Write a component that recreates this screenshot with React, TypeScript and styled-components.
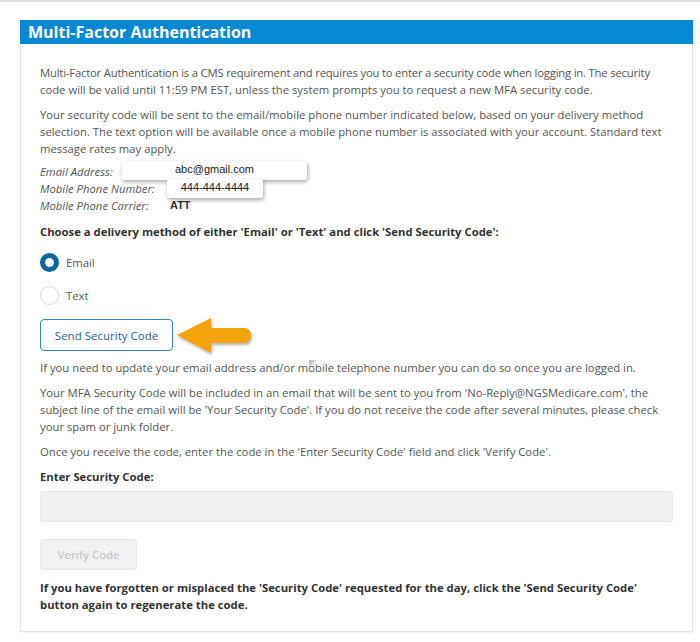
import React from "react";
import styled, { createGlobalStyle } from "styled-components";

const Global = createGlobalStyle`
  html, body { margin: 0; padding: 0; background: #fff; }
  body { font-family: "Open Sans", "Liberation Sans", sans-serif; }
`;

const Page = styled.div`
  width: 700px;
  height: 642px;
  box-sizing: border-box;
  border-top: 2px solid #dcdcdc;
  padding: 18px 0 0 20px;
  position: relative;
  overflow: hidden;
`;

const Card = styled.section`
  width: 673px;
  box-sizing: border-box;
  border: 1px solid #e4e4e4;
  border-top: none;
  box-shadow: 0 1px 2px rgba(0, 0, 0, 0.06);
  background: #fff;
`;

const Header = styled.h1`
  height: 24px;
  background: #0689d4;
  color: #fff;
  font-size: 16px;
  font-weight: 700;
  line-height: 24px;
  padding-left: 8px;
  margin: 0 -1px;
`;

const Body = styled.div`
  padding: 20px 19px 18px 19px;
  color: #555;
  font-size: 11.3px;
  line-height: 17px;
`;

const P = styled.p<{ $bold?: boolean; $mt?: number }>`
  margin: ${(p) => p.$mt ?? 8}px 0 0 0;
  font-weight: ${(p) => (p.$bold ? 700 : 400)};
  color: ${(p) => (p.$bold ? "#333" : "#555")};
  &:first-child { margin-top: 0; }
`;

const Line = styled.span<{ $ls?: number }>`
  display: block;
  white-space: nowrap;
  letter-spacing: ${(p) => p.$ls ?? 0}px;
`;

const InfoList = styled.div`
  margin-top: 6px;
  display: grid;
  grid-template-columns: 130px 1fr;
  position: relative;
`;

const InfoLabel = styled.span`
  font-style: italic;
  color: #555;
`;

const InfoValue = styled.span`
  font-family: "Liberation Sans", Arial, sans-serif;
  font-weight: 700;
  color: #333;
  font-size: 11px;
`;

const Callout = styled.div<{ $left: number; $top: number; $width: number }>`
  position: absolute;
  left: ${(p) => p.$left}px;
  top: ${(p) => p.$top}px;
  width: ${(p) => p.$width}px;
  height: 19px;
  background: #fff;
  border-radius: 3px;
  box-shadow: 1px 2px 4px rgba(0, 0, 0, 0.35);
  font-family: "Liberation Sans", Arial, sans-serif;
  font-size: 11px;
  line-height: 17px;
  color: #222;
  text-align: center;
`;

const Radios = styled.div`
  margin-top: 13px;
  display: flex;
  flex-direction: column;
  gap: 14px;
`;

const RadioRow = styled.label`
  display: flex;
  align-items: center;
  gap: 7px;
  height: 19px;
  color: #555;
`;

const RadioDot = styled.span<{ $checked?: boolean }>`
  width: 19px;
  height: 19px;
  box-sizing: border-box;
  border-radius: 50%;
  background: #fff;
  border: ${(p) => (p.$checked ? "5px solid #0b679f" : "1px solid #dcdcdc")};
`;

const ActionRow = styled.div`
  margin-top: 14px;
  height: 32px;
  display: flex;
  align-items: center;
`;

const OutlineButton = styled.button`
  width: 133px;
  height: 32px;
  box-sizing: border-box;
  border: 1px solid #3a83b3;
  border-radius: 4px;
  background: #fff;
  color: #1f5f8f;
  font-family: "Open Sans", sans-serif;
  font-size: 11.5px;
  padding: 0;
  flex-shrink: 0;
`;

const Arrow = styled.svg`
  margin-left: 3px;
  flex-shrink: 0;
  filter: drop-shadow(1px 2px 1.5px rgba(0, 0, 0, 0.3));
`;

const NoteWrap = styled.div`
  position: relative;
`;

const Cursor = styled.span`
  position: absolute;
  left: 269px;
  top: 1px;
  width: 7px;
  height: 7px;
  background: linear-gradient(135deg, #888 0%, #bbb 55%, transparent 56%);
  opacity: 0.6;
`;

const FieldLabel = styled.div`
  margin-top: 8px;
  font-weight: 700;
  color: #333;
`;

const Input = styled.div`
  margin-top: 6px;
  height: 31px;
  box-sizing: border-box;
  background: #f0f0f2;
  border: 1px solid #e8e8ea;
  border-radius: 3px;
`;

const DisabledButton = styled.button`
  margin-top: 17px;
  width: 97px;
  height: 31px;
  box-sizing: border-box;
  background: #f1f1f3;
  border: 1px solid #e9e9eb;
  border-radius: 3px;
  color: #c9c9cc;
  font-family: "Open Sans", sans-serif;
  font-size: 11.3px;
  font-weight: 600;
  padding: 0;
  display: block;
`;

export default function App() {
  return (
    <>
      <Global />
      <Page>
        <Card>
          <Header>Multi-Factor Authentication</Header>
          <Body>
            <P>
              <Line $ls={-0.2}>
                Multi-Factor Authentication is a CMS requirement and requires you to enter a security code when logging in. The security
              </Line>
              <Line>
                code will be valid until 11:59 PM EST, unless the system prompts you to request a new MFA security code.
              </Line>
            </P>
            <P>
              Your security code will be sent to the email/mobile phone number indicated below, based on your delivery method selection. The text option will be available once a mobile phone number is associated with your account. Standard text message rates may apply.
            </P>
            <InfoList>
              <InfoLabel>Email Address:</InfoLabel>
              <span />
              <InfoLabel>Mobile Phone Number:</InfoLabel>
              <span />
              <InfoLabel>Mobile Phone Carrier:</InfoLabel>
              <InfoValue>ATT</InfoValue>
              <Callout $left={82} $top={-2} $width={185}>abc@gmail.com</Callout>
              <Callout $left={127} $top={16} $width={96}>444-444-4444</Callout>
            </InfoList>
            <P $bold $mt={9}>
              Choose a delivery method of either 'Email' or 'Text' and click 'Send Security Code':
            </P>
            <Radios>
              <RadioRow>
                <RadioDot $checked />
                Email
              </RadioRow>
              <RadioRow>
                <RadioDot />
                Text
              </RadioRow>
            </Radios>
            <ActionRow>
              <OutlineButton>Send Security Code</OutlineButton>
              <Arrow width="76" height="37" viewBox="0 0 76 37">
                <path
                  d="M1 18 L35 1 L35 11 L68 11 Q75 11 75 18.5 Q75 26 68 26 L35 26 L35 36 Z"
                  fill="#f5a30c"
                />
              </Arrow>
            </ActionRow>
            <NoteWrap>
              <Cursor />
              <P $mt={8}>
                If you need to update your email address and/or mobile telephone number you can do so once you are logged in.
              </P>
            </NoteWrap>
            <P>
              Your MFA Security Code will be included in an email that will be sent to you from 'No-Reply@NGSMedicare.com', the subject line of the email will be 'Your Security Code'. If you do not receive the code after several minutes, please check your spam or junk folder.
            </P>
            <P>
              Once you receive the code, enter the code in the 'Enter Security Code' field and click 'Verify Code'.
            </P>
            <FieldLabel>Enter Security Code:</FieldLabel>
            <Input />
            <DisabledButton disabled>Verify Code</DisabledButton>
            <P $bold $mt={9}>
              If you have forgotten or misplaced the 'Security Code' requested for the day, click the 'Send Security Code' button again to regenerate the code.
            </P>
          </Body>
        </Card>
      </Page>
    </>
  );
}
